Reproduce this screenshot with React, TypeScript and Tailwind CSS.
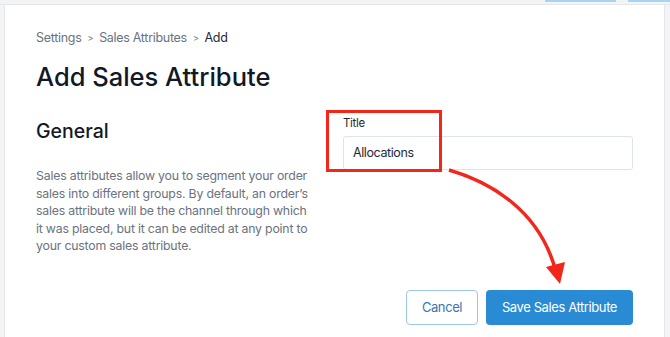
import React from "react";

const font = { fontFamily: "Inter, 'Noto Sans', sans-serif" };

export default function App() {
  return (
    <div className="relative h-[337px] w-[670px] overflow-hidden bg-[#f3f4f6]" style={font}>
      {/* top strip */}
      <div className="relative h-[5px] border-b border-[#e5e7eb]">
        <div className="absolute right-[54px] top-0 h-[2px] w-[71px] bg-[#a9d2f3]" />
        <div className="absolute right-0 top-0 h-[2px] w-[42px] bg-[#a9d2f3]" />
      </div>

      <div className="ml-[4px] mr-[5px] h-[332px] border-l border-r border-[#e5e7eb] bg-white pl-[31px] pr-[31px] pt-[23px]">
        <nav className="flex items-center gap-[6px] text-[12.5px] leading-5 tracking-[-0.3px] text-[#6b7280]">
          <span>Settings</span>
          <span className="text-[9px]">&gt;</span>
          <span>Sales Attributes</span>
          <span className="text-[9px]">&gt;</span>
          <span className="text-[#1f2937]">Add</span>
        </nav>

        <h1 className="mt-[13px] text-[25.5px] font-medium leading-8 text-[#111827]">Add Sales Attribute</h1>

        <div className="mt-[24px] grid grid-cols-[272px_290px] gap-[35px]">
          <div>
            <h2 className="text-[19.5px] font-medium leading-7 text-[#111827]">General</h2>
            <p className="mt-[22px] text-[12.3px] leading-[17.6px] tracking-[-0.2px] text-[#6b7280]">
              Sales attributes allow you to segment your order sales into different groups. By default, an order’s sales
              attribute will be the channel through which it was placed, but it can be edited at any point to your
              custom sales attribute.
            </p>
          </div>
          <div>
            <label className="-mt-[2px] block text-[11.5px] leading-4 tracking-[-0.3px] text-[#1f2937]">Title</label>
            <div className="mt-[5px] flex h-[34px] items-center rounded-[3px] border border-[#e0e3e8] px-[9px] text-[12.5px] tracking-[-0.4px] text-[#1f2937]">
              Allocations
            </div>
            <div className="mt-[120px] flex justify-end gap-[8px]">
              <button className="h-[35px] w-[72px] rounded-[4px] border border-[#9cc6ea] bg-white text-[13px] tracking-[-0.4px] text-[#3478b8]">
                Cancel
              </button>
              <button className="h-[35px] w-[147px] rounded-[4px] bg-[#2a8bd5] text-[13px] tracking-[-0.4px] text-white">
                Save Sales Attribute
              </button>
            </div>
          </div>
        </div>
      </div>

      {/* annotation */}
      <div className="absolute left-[326px] top-[110px] h-[62px] w-[116px] border-[3px] border-[#f2261b]" />
      <svg className="absolute left-0 top-0" width="670" height="337" viewBox="0 0 670 337">
        <path d="M449 170 C 490 182, 540 210, 556 272" fill="none" stroke="#f2261b" strokeWidth="3.5" />
        <polygon points="546,267 565,262 560,284" fill="#f2261b" />
      </svg>
    </div>
  );
}
